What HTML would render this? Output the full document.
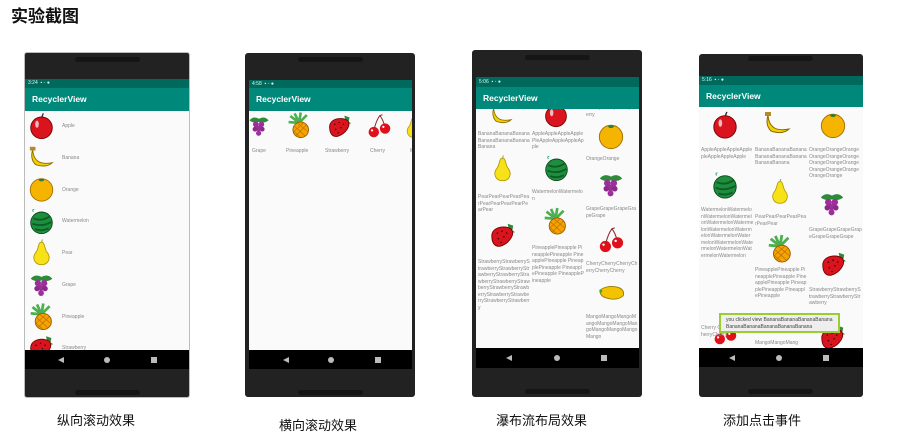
<!DOCTYPE html>
<html><head><meta charset="utf-8"><style>
*{margin:0;padding:0;box-sizing:border-box}
body{width:903px;height:437px;background:#fff;position:relative;overflow:hidden;font-family:"Liberation Sans","Noto Sans CJK SC",sans-serif}
.abs{position:absolute}
.phone{position:absolute;background:#222;border-radius:3px}
.spk{position:absolute;height:5px;background:#151515;border-radius:3px}
.status{position:absolute;background:#00695c;color:#cfe;font-size:5px;line-height:9px;padding-left:3px}
.bar{position:absolute;background:#00897b;color:#fff;font-size:8.5px;font-weight:bold;padding-left:7px}
.scr{position:absolute;background:#fafafa;overflow:hidden}
.nav{position:absolute;background:#000}
.nav i{position:absolute;top:7px;width:6px;height:6px;background:#bbb}
.t{position:absolute;font-size:5px;color:#888;line-height:6.5px;word-break:break-all}
.cap{position:absolute;font-size:13px;color:#111}
svg.f{position:absolute}
</style></head><body>
<svg width="0" height="0" style="position:absolute">
<defs>
<symbol id="apple" viewBox="0 0 30 30"><path d="M15 6 L17 1" stroke="#333" stroke-width="1.5"/><circle cx="15" cy="17" r="12" fill="#d9141e" stroke="#700" stroke-width="1"/><ellipse cx="10" cy="13" rx="2" ry="4" fill="#fff" opacity=".7"/></symbol>
<symbol id="banana" viewBox="0 0 30 30"><path d="M5 6 Q6 24 26 20 Q20 26 8 22 Q2 16 5 6Z" fill="#f4d000" stroke="#8a6a00" stroke-width="1"/><rect x="2" y="3" width="6" height="4" fill="#b38b2a"/></symbol>
<symbol id="orange" viewBox="0 0 30 30"><circle cx="15" cy="16" r="12.5" fill="#f4b400" stroke="#a76f00" stroke-width="1"/><ellipse cx="15" cy="5" rx="3" ry="1.5" fill="#2e7d32"/></symbol>
<symbol id="melon" viewBox="0 0 30 30"><circle cx="15" cy="17" r="12" fill="#1e8e3e" stroke="#0a4a1a" stroke-width="1"/><path d="M6 12 Q15 16 24 10 M5 18 Q15 22 26 16 M8 24 Q15 27 23 23" stroke="#0b5d24" stroke-width="2" fill="none"/><path d="M6 5 q-2 -3 1 -3" stroke="#2a7" fill="none"/></symbol>
<symbol id="pear" viewBox="0 0 30 30"><path d="M15 3 C11 3 12 10 9 14 C4 20 7 28 15 28 C23 28 26 20 21 14 C18 10 19 3 15 3Z" fill="#f7e21a" stroke="#b39c00" stroke-width="1"/><path d="M15 3 L16 0" stroke="#8a5" stroke-width="1.2"/></symbol>
<symbol id="grape" viewBox="0 0 30 30"><path d="M3 8 Q8 2 15 6 Q22 2 27 8 Q22 12 15 10 Q8 12 3 8Z" fill="#2e8b3a"/><circle cx="11" cy="13" r="3.5" fill="#9c2f9a"/><circle cx="18" cy="13" r="3.5" fill="#9c2f9a"/><circle cx="14.5" cy="18" r="3.5" fill="#9c2f9a"/><circle cx="10" cy="19" r="3" fill="#8c2a8a"/><circle cx="19" cy="19" r="3" fill="#8c2a8a"/><circle cx="14.5" cy="24" r="3.2" fill="#9c2f9a"/></symbol>
<symbol id="pine" viewBox="0 0 30 30"><path d="M15 12 L5 4 M15 12 L10 1 M15 12 L17 0 M15 12 L24 3 M15 12 L3 11" stroke="#4caf50" stroke-width="3"/><ellipse cx="17" cy="20" rx="9" ry="9" fill="#f5a300" stroke="#9a5b00" stroke-width="1"/><path d="M10 16 L22 27 M13 12 L25 22 M9 22 L16 28 M24 14 L11 27 M20 12 L9 22" stroke="#b56b00" stroke-width=".7"/></symbol>
<symbol id="straw" viewBox="0 0 30 30"><path d="M20 3 l6 2 l-1 5 l3 2 l-6 1Z" fill="#2e8b3a"/><path d="M3 16 C3 6 18 4 24 9 C28 14 22 24 12 27 C5 28 3 22 3 16Z" fill="#d9141e" stroke="#700" stroke-width="1"/><g fill="#300"><circle cx="9" cy="13" r=".8"/><circle cx="14" cy="11" r=".8"/><circle cx="19" cy="13" r=".8"/><circle cx="10" cy="19" r=".8"/><circle cx="16" cy="17" r=".8"/><circle cx="13" cy="23" r=".8"/></g></symbol>
<symbol id="cherry" viewBox="0 0 30 30"><path d="M9 20 Q12 8 16 3 Q20 8 22 17 M16 3 l3 -1" stroke="#8b2d2d" stroke-width="1.2" fill="none"/><circle cx="9" cy="22" r="6" fill="#e0101b"/><circle cx="22" cy="18" r="6" fill="#e0101b"/><circle cx="7" cy="20" r="1.3" fill="#fff"/><circle cx="20" cy="16" r="1.3" fill="#fff"/></symbol>
<symbol id="mango" viewBox="0 0 30 30"><path d="M2 12 Q10 6 22 9 Q29 12 27 18 Q20 24 8 20 Q2 18 2 12Z" fill="#f4c300" stroke="#9a7a00" stroke-width="1"/><circle cx="3" cy="13" r="1.5" fill="#3a3"/></symbol>
</defs></svg>

<div class="abs" style="left:11px;top:2px;font-size:17px;font-weight:bold;color:#111">实验截图</div>

<!-- Phone 1 -->
<div class="phone" style="left:24px;top:52px;width:166px;height:346px;border:1px solid #bbb"></div>
<div class="spk" style="left:75px;top:57px;width:65px"></div>
<div class="status" style="left:25px;top:79px;width:164px;height:9px">3:24 &nbsp;▪ ◦ ●</div>
<div class="bar" style="left:25px;top:88px;width:164px;height:23px;line-height:23px">RecyclerView</div>
<div class="scr" style="left:25px;top:111px;width:164px;height:239px">
<svg class="f" style="left:3px;top:1px" width="27" height="28"><use href="#apple"/></svg><div class="t" style="left:37px;top:12px">Apple</div>
<svg class="f" style="left:2px;top:33px" width="30" height="28"><use href="#banana"/></svg><div class="t" style="left:37px;top:44px">Banana</div>
<svg class="f" style="left:3px;top:64px" width="27" height="28"><use href="#orange"/></svg><div class="t" style="left:37px;top:76px">Orange</div>
<svg class="f" style="left:3px;top:96px" width="27" height="28"><use href="#melon"/></svg><div class="t" style="left:37px;top:107px">Watermelon</div>
<svg class="f" style="left:3px;top:128px" width="27" height="28"><use href="#pear"/></svg><div class="t" style="left:37px;top:139px">Pear</div>
<svg class="f" style="left:3px;top:160px" width="27" height="28"><use href="#grape"/></svg><div class="t" style="left:37px;top:171px">Grape</div>
<svg class="f" style="left:3px;top:192px" width="27" height="28"><use href="#pine"/></svg><div class="t" style="left:37px;top:203px">Pineapple</div>
<svg class="f" style="left:3px;top:222px" width="27" height="28"><use href="#straw"/></svg><div class="t" style="left:37px;top:234px">Strawberry</div>
</div>
<div class="nav" style="left:25px;top:350px;width:164px;height:19px"><i style="left:33px;clip-path:polygon(100% 0,0 50%,100% 100%)"></i><i style="left:79px;border-radius:50%"></i><i style="left:126px"></i></div>
<div class="spk" style="left:75px;top:390px;width:65px"></div>

<!-- Phone 2 -->
<div class="phone" style="left:245px;top:53px;width:170px;height:344px"></div>
<div class="spk" style="left:298px;top:57px;width:65px"></div>
<div class="status" style="left:249px;top:80px;width:163px;height:8px">4:58 &nbsp;▪ ◦ ●</div>
<div class="bar" style="left:249px;top:88px;width:163px;height:23px;line-height:23px">RecyclerView</div>
<div class="scr" style="left:249px;top:111px;width:163px;height:239px">
<svg class="f" style="left:-2px;top:2px" width="24" height="26"><use href="#grape"/></svg><div class="t" style="left:3px;top:37px">Grape</div>
<svg class="f" style="left:37px;top:1px" width="26" height="27"><use href="#pine"/></svg><div class="t" style="left:37px;top:37px">Pineapple</div>
<svg class="f" style="left:77px;top:2px" width="28" height="26"><use href="#straw"/></svg><div class="t" style="left:76px;top:37px">Strawberry</div>
<svg class="f" style="left:116px;top:2px" width="28" height="26"><use href="#cherry"/></svg><div class="t" style="left:121px;top:37px">Cherry</div>
<svg class="f" style="left:153px;top:4px" width="24" height="24"><use href="#pear"/></svg><div class="t" style="left:161px;top:37px">M</div>
</div>
<div class="nav" style="left:249px;top:350px;width:163px;height:19px"><i style="left:34px;clip-path:polygon(100% 0,0 50%,100% 100%)"></i><i style="left:79px;border-radius:50%"></i><i style="left:126px"></i></div>
<div class="spk" style="left:298px;top:390px;width:65px"></div>

<!-- Phone 3 -->
<div class="phone" style="left:472px;top:50px;width:170px;height:347px"></div>
<div class="spk" style="left:525px;top:55px;width:65px"></div>
<div class="status" style="left:476px;top:77px;width:163px;height:10px;line-height:10px">5:06 &nbsp;▪ ◦ ●</div>
<div class="bar" style="left:476px;top:87px;width:163px;height:22px;line-height:22px">RecyclerView</div>
<div class="scr" style="left:476px;top:109px;width:163px;height:239px">
<svg class="f" style="left:12px;top:-6px" width="28" height="25"><use href="#banana"/></svg>
<div class="t" style="left:2px;top:22px;width:52px">BananaBananaBananaBananaBananaBananaBanana</div>
<svg class="f" style="left:13px;top:45px" width="27" height="30"><use href="#pear"/></svg>
<div class="t" style="left:2px;top:85px;width:52px">PearPearPearPearPearPearPearPearPearPearPear</div>
<svg class="f" style="left:12px;top:112px" width="30" height="28"><use href="#straw"/></svg>
<div class="t" style="left:2px;top:150px;width:52px">StrawberryStrawberryStrawberryStrawberryStrawberryStrawberryStrawberryStrawberryStrawberryStrawberryStrawberryStrawberryStrawberryStrawberryStrawberry</div>
<svg class="f" style="left:67px;top:-8px" width="26" height="27"><use href="#apple"/></svg>
<div class="t" style="left:56px;top:22px;width:52px">AppleAppleAppleApplePleAppleAppleAppleApple</div>
<svg class="f" style="left:67px;top:45px" width="27" height="28"><use href="#melon"/></svg>
<div class="t" style="left:56px;top:80px;width:52px">WatermelonWatermelon</div>
<svg class="f" style="left:66px;top:98px" width="27" height="29"><use href="#pine"/></svg>
<div class="t" style="left:56px;top:136px;width:52px;line-height:6.6px">PineapplePineapple PineapplePineapple PineapplePineapple PineapplePineapple PineapplePineapple PineapplePineapple</div>
<div class="t" style="left:110px;top:-4px;width:52px">CherryCherryCherryCherry</div>
<svg class="f" style="left:121px;top:13px" width="28" height="28"><use href="#orange"/></svg>
<div class="t" style="left:110px;top:47px;width:52px">OrangeOrange</div>
<svg class="f" style="left:121px;top:62px" width="28" height="28"><use href="#grape"/></svg>
<div class="t" style="left:110px;top:97px;width:52px">GrapeGrapeGrapeGrapeGrape</div>
<svg class="f" style="left:121px;top:117px" width="28" height="28"><use href="#cherry"/></svg>
<div class="t" style="left:110px;top:152px;width:52px">CherryCherryCherryCherryCherryCherry</div>
<svg class="f" style="left:120px;top:170px" width="32" height="28"><use href="#mango"/></svg>
<div class="t" style="left:110px;top:205px;width:52px">MangoMangoMangoMangoMangoMangoMangoMangoMangoMangoMango</div>
</div>
<div class="nav" style="left:476px;top:348px;width:163px;height:20px"><i style="left:30px;clip-path:polygon(100% 0,0 50%,100% 100%)"></i><i style="left:78px;border-radius:50%"></i><i style="left:125px"></i></div>
<div class="spk" style="left:525px;top:389px;width:65px"></div>

<!-- Phone 4 -->
<div class="phone" style="left:699px;top:54px;width:164px;height:343px"></div>
<div class="spk" style="left:748px;top:56px;width:65px"></div>
<div class="status" style="left:699px;top:76px;width:164px;height:9px">5:16 &nbsp;▪ ◦ ●</div>
<div class="bar" style="left:699px;top:85px;width:164px;height:22px;line-height:22px">RecyclerView</div>
<div class="scr" style="left:699px;top:107px;width:164px;height:241px">
<svg class="f" style="left:12px;top:3px" width="28" height="30"><use href="#apple"/></svg>
<div class="t" style="left:2px;top:40px;width:53px">AppleAppleAppleApplepleAppleAppleApple</div>
<svg class="f" style="left:12px;top:63px" width="28" height="30"><use href="#melon"/></svg>
<div class="t" style="left:2px;top:100px;width:53px">WatermelonWatermelonWatermelonWatermelonWatermelonWatermelonWatermelonWatermelonWatermelonWatermelonWatermelonWatermelonWatermelonWatermelonWatermelon</div>
<svg class="f" style="left:12px;top:213px" width="28" height="26"><use href="#cherry"/></svg>
<div class="t" style="left:2px;top:218px;width:53px">Cherry Cherry CherryCherryCherry</div>
<svg class="f" style="left:63px;top:2px" width="32" height="30"><use href="#banana"/></svg>
<div class="t" style="left:56px;top:40px;width:52px">BananaBananaBananaBananaBananaBananaBananaBanana</div>
<svg class="f" style="left:68px;top:70px" width="26" height="30"><use href="#pear"/></svg>
<div class="t" style="left:56px;top:107px;width:52px">PearPearPearPearPearPearPear</div>
<svg class="f" style="left:67px;top:127px" width="28" height="30"><use href="#pine"/></svg>
<div class="t" style="left:56px;top:160px;width:52px;line-height:6.6px">PineapplePineapple PineapplePineapple PineapplePineapple PineapplePineapple PineapplePineapple</div>
<div class="t" style="left:56px;top:233px;width:52px">MangoMangoMang</div>
<svg class="f" style="left:120px;top:3px" width="28" height="30"><use href="#orange"/></svg>
<div class="t" style="left:110px;top:40px;width:53px">OrangeOrangeOrangeOrangeOrangeOrangeOrangeOrangeOrangeOrangeOrangeOrangeOrangeOrange</div>
<svg class="f" style="left:119px;top:83px" width="28" height="28"><use href="#grape"/></svg>
<div class="t" style="left:110px;top:120px;width:53px">GrapeGrapeGrapeGrapeGrapeGrapeGrape</div>
<svg class="f" style="left:120px;top:143px" width="30" height="28"><use href="#straw"/></svg>
<div class="t" style="left:110px;top:180px;width:53px">StrawberryStrawberryStrawberryStrawberryStrawberry</div>
<svg class="f" style="left:120px;top:216px" width="28" height="28"><use href="#straw"/></svg>
<div class="abs" style="left:20px;top:206px;width:121px;height:20px;border:2px solid #9acd32;background:#eeeeee;font-size:5px;color:#444;line-height:7px;padding:2px 5px;word-break:break-all">you clicked view BananaBananaBananaBananaBananaBananaBananaBananaBanana</div>
</div>
<div class="nav" style="left:699px;top:348px;width:164px;height:19px"><i style="left:30px;clip-path:polygon(100% 0,0 50%,100% 100%)"></i><i style="left:77px;border-radius:50%"></i><i style="left:124px"></i></div>
<div class="spk" style="left:748px;top:389px;width:65px"></div>

<div class="cap" style="left:57px;top:410px">纵向滚动效果</div>
<div class="cap" style="left:279px;top:415px">横向滚动效果</div>
<div class="cap" style="left:496px;top:410px">瀑布流布局效果</div>
<div class="cap" style="left:723px;top:410px">添加点击事件</div>
</body></html>
